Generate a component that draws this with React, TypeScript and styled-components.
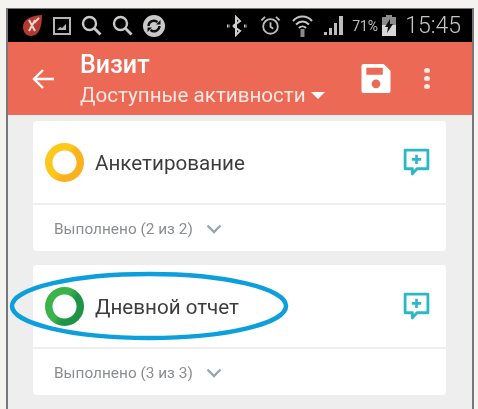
import { createGlobalStyle, styled } from "styled-components";

const GlobalStyle = createGlobalStyle`
  html, body {
    margin: 0;
    padding: 0;
    background: #f5f3f0;
  }
  body {
    font-family: "Roboto", "Liberation Sans", sans-serif;
  }
`;

const activities = [
  { title: "Анкетирование", done: "Выполнено (2 из 2)", from: "#fdc71c", to: "#fbb01e" },
  { title: "Дневной отчет", done: "Выполнено (3 из 3)", from: "#3cb34a", to: "#1f9447" },
];

const SearchGlyph = () => (
  <svg width="21" height="21" viewBox="0 0 21 21">
    <circle cx="8.500" cy="8.500" r="6.500" stroke="#c9c9c9" strokeWidth="2.400" fill="none" />
    <path d="M13.500 13.500l6 6" stroke="#c9c9c9" strokeWidth="2.800" />
  </svg>
);

const StatusIcons = () => (
  <StatusBar>
    <StatusGroup>
      <svg width="22" height="23" viewBox="0 0 22 23">
        <path d="M2 13C2 6 8 2 21 1c0 12-3 21-11 21-5 0-8-4-8-9z" fill="#b23a30" />
        <path d="M8 6l6 11M14 6l-6 11M13 9l5-5" stroke="#e8d5d0" strokeWidth="2" fill="none" />
      </svg>
      <svg width="18" height="18" viewBox="0 0 18 18">
        <rect x="1" y="1" width="16" height="16" fill="none" stroke="#b5b5b5" strokeWidth="2" />
        <path d="M4 13l3-3 2 1 4-4v6z" fill="#b5b5b5" />
      </svg>
      <SearchGlyph />
      <SearchGlyph />
      <svg width="22" height="22" viewBox="0 0 22 22">
        <circle cx="11" cy="11" r="11" fill="#c9c9c9" />
        <path d="M5.500 11a5.500 5.500 0 0 1 9-4M16.500 11a5.500 5.500 0 0 1-9 4" stroke="#111" strokeWidth="2.400" fill="none" />
        <path d="M13 9.500h4.500V5zM9 12.500H4.500V17z" fill="#111" />
      </svg>
    </StatusGroup>
    <StatusGroupRight>
      <svg width="24" height="22" viewBox="0 0 24 22">
        <path d="M8 11l7-5-4-4v18l4-4-7-5" stroke="#cfcfcf" strokeWidth="2" fill="none" />
        <path d="M2 11h3M19 11h3" stroke="#cfcfcf" strokeWidth="3" strokeDasharray="1.500 1" />
      </svg>
      <svg width="21" height="23" viewBox="0 0 23 23">
        <circle cx="11.500" cy="12.500" r="8" stroke="#bdbdbd" strokeWidth="2" fill="none" />
        <path d="M11.500 8v5l3 2M1.500 6l4-4M21.500 6l-4-4" stroke="#bdbdbd" strokeWidth="2" fill="none" />
      </svg>
      <svg width="21" height="24" viewBox="0 0 21 24">
        <path d="M1 7c5-6 14-6 19 0M4 10.500c4-4 9-4 13 0M7 14c2-2 5-2 7 0" stroke="#c4c4c4" strokeWidth="2" fill="none" />
        <path d="M10.500 15v8" stroke="#8a8a8a" strokeWidth="4" />
      </svg>
      <svg width="20" height="20" viewBox="0 0 20 20">
        <path d="M0 19h3v-3H0zM5 19h3v-7H5zM10 19h3V7h-3zM15 19h4V0h-4z" fill="#bdbdbd" />
      </svg>
      <BatteryText>71%</BatteryText>
      <svg width="14" height="21" viewBox="0 0 14 21">
        <path d="M4 0h6v2h4v19H0V2h4z" fill="#8c8c8c" />
        <path d="M0 10h14v11H0z" fill="#d8d8d8" />
        <path d="M8 4L3 12h3l-1 6 6-9H8z" fill="#111" />
      </svg>
      <Clock>15:45</Clock>
    </StatusGroupRight>
  </StatusBar>
);

const ActivityCard = ({ title, done, from, to }: (typeof activities)[number]) => (
  <Card>
    <CardTop>
      <Ring $from={from} $to={to} />
      <CardTitle>{title}</CardTitle>
      <svg width="27" height="28" viewBox="0 0 26 27">
        <path d="M2 2h22v18H13.500L9 25v-5H2z" fill="none" stroke="#2bb8c6" strokeWidth="2.700" strokeLinejoin="round" />
        <path d="M13 6.500v9M8.500 11h9" stroke="#2bb8c6" strokeWidth="2.500" />
      </svg>
    </CardTop>
    <CardBottom>
      <DoneText>{done}</DoneText>
      <svg width="16" height="10" viewBox="0 0 16 10">
        <path d="M1.500 1.500L8 8l6.500-6.500" stroke="#94a7ae" strokeWidth="2.400" fill="none" />
      </svg>
    </CardBottom>
  </Card>
);

const App = () => {
  return (
    <>
      <GlobalStyle />
      <Phone>
        <StatusIcons />
        <Header>
          <svg width="24" height="22" viewBox="0 0 24 22">
            <path d="M22 11H3M11 2l-9 9 9 9" stroke="#fff" strokeWidth="2.400" fill="none" />
          </svg>
          <HeaderTitles>
            <HeaderTitle>Визит</HeaderTitle>
            <HeaderSubtitle>
              Доступные активности
              <Caret />
            </HeaderSubtitle>
          </HeaderTitles>
          <svg width="30" height="29" viewBox="0 0 30 30">
            <path
              fillRule="evenodd"
              d="M2 0h21l7 7v21a2 2 0 0 1-2 2H2a2 2 0 0 1-2-2V2a2 2 0 0 1 2-2zM5 4v7h17V4zM15 16a4.500 4.500 0 1 0 0 9 4.500 4.500 0 0 0 0-9z"
              fill="#fff"
            />
          </svg>
          <MenuDots>
            <span />
            <span />
            <span />
          </MenuDots>
        </Header>
        <Content>
          {activities.map((a) => (
            <ActivityCard key={a.title} {...a} />
          ))}
        </Content>
        <Highlight width="284" height="72" viewBox="0 0 284 72">
          <ellipse cx="141" cy="36" rx="137" ry="32" fill="none" stroke="#0d9fdc" strokeWidth="4.500" />
        </Highlight>
      </Phone>
    </>
  );
};

export default App;

const Phone = styled.div`
  position: relative;
  box-sizing: border-box;
  width: 468px;
  height: 401px;
  margin: 8px 0 0 6px;
  border-left: 2px solid #77787a;
  border-right: 2px solid #77787a;
  border-top: 1px solid #77787a;
  overflow: hidden;
  filter: blur(0.35px);
`;

const StatusBar = styled.div`
  display: flex;
  justify-content: space-between;
  align-items: center;
  box-sizing: border-box;
  height: 33px;
  padding: 0 11px 0 13px;
  background: #000;
`;

const StatusGroup = styled.div`
  display: flex;
  align-items: center;
  gap: 10px;
`;

const StatusGroupRight = styled.div`
  display: flex;
  align-items: center;
  gap: 11px;
`;

const BatteryText = styled.span`
  margin-left: -3px;
  margin-right: -7px;
  color: #bdbdbd;
  font-size: 14px;
`;

const Clock = styled.span`
  margin-left: -2px;
  color: #c4c4c4;
  font-size: 23px;
  font-weight: 300;
`;

const Header = styled.div`
  display: flex;
  align-items: center;
  box-sizing: border-box;
  height: 73px;
  padding: 0 42px 0 24px;
  background: #ec6a55;
  color: #fff;
`;

const HeaderTitles = styled.div`
  display: flex;
  flex-direction: column;
  gap: 5px;
  flex: 1;
  margin: 2px 0 0 24px;
`;

const HeaderTitle = styled.div`
  font-size: 25px;
  font-weight: 500;
  line-height: 26px;
`;

const HeaderSubtitle = styled.div`
  display: flex;
  align-items: center;
  font-size: 20.600px;
  line-height: 24px;
  color: #fde8e3;
`;

const Caret = styled.span`
  margin-left: 5px;
  border-left: 7px solid transparent;
  border-right: 7px solid transparent;
  border-top: 7px solid #fff;
`;

const MenuDots = styled.div`
  display: flex;
  flex-direction: column;
  gap: 3px;
  margin-left: 33px;

  span {
    width: 6px;
    height: 5px;
    border-radius: 50%;
    background: #fde8e3;
  }
`;

const Content = styled.div`
  display: flex;
  flex-direction: column;
  gap: 14px;
  height: 295px;
  padding: 6px 26px 0 25px;
  background: #eeeeee;
`;

const Card = styled.div`
  border-radius: 4px;
  background: #fff;
`;

const CardTop = styled.div`
  display: flex;
  align-items: center;
  box-sizing: border-box;
  height: 84px;
  padding: 0 16px 0 12px;
  border-bottom: 2px solid #eeeeee;
`;

const Ring = styled.div<{ $from: string; $to: string }>`
  box-sizing: border-box;
  width: 39px;
  height: 39px;
  border-radius: 50%;
  background:
    radial-gradient(circle, #fff 0 11.500px, transparent 12.500px),
    linear-gradient(120deg, ${({ $from }) => $from} 45%, ${({ $to }) => $to} 60%);
`;

const CardTitle = styled.span`
  flex: 1;
  margin: 2px 0 0 11px;
  color: #3d3d3d;
  font-size: 20.600px;
`;

const CardBottom = styled.div`
  display: flex;
  align-items: center;
  gap: 13px;
  height: 46px;
  padding: 1px 0 0 21px;
  box-sizing: border-box;
`;

const DoneText = styled.span`
  color: #8a8d90;
  font-size: 15.400px;
`;

const Highlight = styled.svg`
  position: absolute;
  left: 0;
  top: 261px;
`;
